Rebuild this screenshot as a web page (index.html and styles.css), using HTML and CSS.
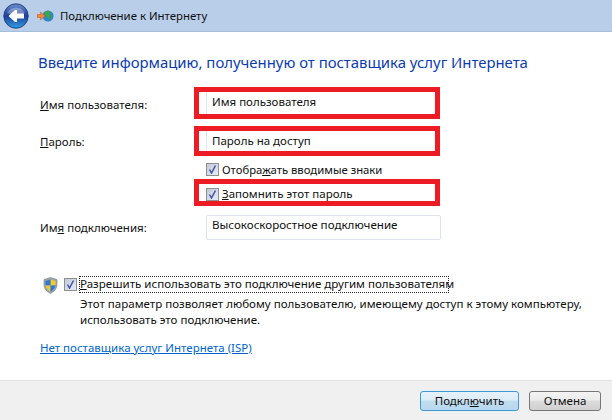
FILE: index.html
```html
<!DOCTYPE html>
<html lang="ru">
<head>
    <title>Подключение к Интернету</title>
    <meta charset="UTF-8">
    <link rel="stylesheet" href="styles.css">
</head>
<body>
    <div class="header">
        <svg class="back-icon" width="26" height="26" viewBox="0 0 26 26">
            <defs>
                <linearGradient id="backfill" x1="0" y1="0" x2="0" y2="1">
                    <stop offset="0" stop-color="#6f8fd0"/>
                    <stop offset="0.5" stop-color="#1c3f98"/>
                    <stop offset="1" stop-color="#2fa0e6"/>
                </linearGradient>
            </defs>
            <circle cx="13" cy="13" r="12.2" fill="url(#backfill)" stroke="#24407c" stroke-width="1"/>
            <path d="M4.5 10 A9 8 0 0 1 21.5 10 Q13 14 4.5 10 Z" fill="#ffffff" opacity="0.3"/>
            <path d="M5.5 13 L12 7 L14 7 L14 10.5 L21 10.5 L21 15.5 L14 15.5 L14 19 L12 19 Z" fill="#ffffff"/>
        </svg>
        <svg class="globe-icon" width="17" height="14" viewBox="0 0 17 14">
            <circle cx="11" cy="7" r="5.6" fill="#2f86c8"/>
            <path d="M8 3 Q11 1 13 2.5 L12.5 5 L14 7 L12 10 L10 8 L8 6 Z" fill="#3fa63c"/>
            <path d="M14 9 L16 8 L15 11 Z" fill="#3fa63c"/>
            <path d="M0.5 5.5 L3.5 5.5 L3.5 3 L8 7 L3.5 11 L3.5 8.5 L0.5 8.5 Z" fill="#f0883a" stroke="#c8602a" stroke-width="0.6"/>
        </svg>
        <span class="header-title">Подключение к Интернету</span>
    </div>

    <div class="main">
        <h1>Введите информацию, полученную от поставщика услуг Интернета</h1>

        <div class="form">
            <div class="label label-user"><u>И</u>мя пользователя:</div>
            <div class="marked marked-user"><div class="field">Имя пользователя</div></div>

            <div class="label label-pass"><u>П</u>ароль:</div>
            <div class="marked marked-pass"><div class="field">Пароль на доступ</div></div>

            <div class="check-row check-show">
                <span class="check"><svg width="9" height="9" viewBox="0 0 9 9"><path d="M1.5 4.5 L3.5 8 L7.5 0.5" class="tick"/></svg></span>
                <span class="check-text">Отобра<u>ж</u>ать вводимые знаки</span>
            </div>
            <div class="marked marked-save">
                <div class="check-row">
                    <span class="check"><svg width="9" height="9" viewBox="0 0 9 9"><path d="M1.5 4.5 L3.5 8 L7.5 0.5" class="tick"/></svg></span>
                    <span><u>З</u>апомнить этот пароль</span>
                </div>
            </div>

            <div class="label label-conn">Им<u>я</u> подключения:</div>
            <div class="input-box">Высокоскоростное подключение</div>
        </div>

        <div class="share">
            <svg class="shield" width="15" height="17" viewBox="0 0 15 17">
                <path d="M7.5 0.5 L14 2.5 L14 8 Q14 13 7.5 16.5 Q1 13 1 8 L1 2.5 Z" fill="#9aa3ab" stroke="#7c858c" stroke-width="0.6"/>
                <path d="M7.5 2.5 L12.5 4 L12.5 8.5 L7.5 8.5 Z" fill="#f4c92e"/>
                <path d="M7.5 2.5 L2.5 4 L2.5 8.5 L7.5 8.5 Z" fill="#2f78cf"/>
                <path d="M2.5 8.5 L7.5 8.5 L7.5 14.5 Q3.5 12.5 2.5 8.5 Z" fill="#f4c92e"/>
                <path d="M12.5 8.5 L7.5 8.5 L7.5 14.5 Q11.5 12.5 12.5 8.5 Z" fill="#2f78cf"/>
            </svg>
            <span class="check check-share"><svg width="9" height="9" viewBox="0 0 9 9"><path d="M1.5 4.5 L3.5 8 L7.5 0.5" class="tick"/></svg></span>
            <div class="share-text">
                <div class="focused"><u>Р</u>азрешить использовать это подключение другим пользователям</div>
                <div class="desc">Этот параметр позволяет любому пользователю, имеющему доступ к этому компьютеру,<br>использовать это подключение.</div>
            </div>
        </div>

        <div class="isp-link">Нет поставщика услуг Интернета (ISP)</div>
    </div>

    <div class="footer">
        <div class="btn btn-default">Подкл<u>ю</u>чить</div>
        <div class="btn btn-cancel">Отмена</div>
    </div>
</body>
</html>
```

FILE: styles.css
```css
html, body {
    margin: 0;
    padding: 0;
}

body {
    width: 612px;
    height: 420px;
    overflow: hidden;
    display: flex;
    flex-direction: column;
    background: #ffffff;
    color: #101010;
    font-family: "Noto Sans", "Open Sans", sans-serif;
    font-size: 11.5px;
    line-height: 16px;
}

.header {
    height: 31px;
    flex: none;
    display: flex;
    align-items: center;
    background: #b9cfe9;
    border-bottom: 1px solid #a6bdd8;
}

.back-icon {
    margin-left: 3px;
}

.globe-icon {
    margin-left: 8px;
}

.header-title {
    margin-left: 6px;
    font-size: 11.4px;
}

.main {
    flex: 1;
    padding: 20px 0 0 40px;
}

h1 {
    margin: 0 0 15px -2px;
    font-size: 14.9px;
    font-weight: normal;
    line-height: 20px;
    color: #0a3cb0;
}

.form {
    display: grid;
    grid-template-columns: 154px 246px;
    width: 400px;
}

.label-user {
    grid-column: 1;
    padding-top: 10px;
}

.label-pass {
    margin-top: 7px;
    padding-top: 8px;
}

.label-conn {
    margin-top: 9px;
    padding-top: 5px;
}

.marked {
    border: 5px solid #ed1c24;
    box-sizing: border-box;
}

.marked-user {
    height: 32px;
}

.marked-pass {
    height: 30px;
    margin-top: 7px;
}

.field {
    height: 100%;
    margin-left: 7px;
    padding-left: 5px;
    border-left: 1px solid #e2e7ee;
    line-height: 20px;
}

.check-row {
    display: flex;
    align-items: center;
}

.check-show {
    grid-column: 2;
    margin: 7px 0 3px 12px;
    height: 13px;
}

.check-text {
    font-size: 11.3px;
}

.marked-save {
    grid-column: 2;
    height: 27px;
    padding: 2px 0 0 7px;
}

.check {
    width: 11px;
    height: 11px;
    flex: none;
    margin-right: 3px;
    display: flex;
    align-items: center;
    justify-content: center;
    border: 1px solid #8e8f8f;
    background: linear-gradient(135deg, #c3c9d9, #e8ebf1);
}

.tick {
    fill: none;
    stroke: #3f55ad;
    stroke-width: 1.5;
}

.input-box {
    grid-column: 2;
    width: 235px;
    height: 25px;
    box-sizing: border-box;
    margin: 9px 0 0 12px;
    padding: 1px 0 0 5px;
    border: 1px solid #dde3ea;
    border-radius: 2px;
    font-size: 11.6px;
}

.share {
    display: flex;
    align-items: flex-start;
    margin: 36px 0 0 3px;
}

.shield {
    margin-top: 1px;
}

.check-share {
    margin: 2px 2px 0 6px;
}

.share-text {
    font-size: 11.55px;
}

.focused {
    width: 370px;
    box-sizing: border-box;
    height: 17px;
    padding-left: 1px;
    white-space: nowrap;
    outline: 1px dotted #222222;
    outline-offset: -1px;
}

.desc {
    margin-top: 3px;
    padding-left: 1px;
}

.isp-link {
    margin-top: 12px;
    color: #0066cc;
    text-decoration: underline;
}

.footer {
    height: 40px;
    flex: none;
    display: flex;
    justify-content: flex-end;
    gap: 10px;
    padding: 10px 11px 0 0;
    box-sizing: border-box;
    background: #f0f0f0;
    border-top: 1px solid #dfdfdf;
}

.btn {
    height: 20px;
    box-sizing: border-box;
    border-radius: 3px;
    text-align: center;
    line-height: 18px;
}

.btn-default {
    width: 99px;
    border: 1px solid #3b9bd8;
    background: linear-gradient(#e6f2fa 0%, #dcecf7 45%, #c0dcef 50%, #b9d8ee 100%);
}

.btn-cancel {
    width: 72px;
    border: 1px solid #777777;
    background: linear-gradient(#f4f4f4 0%, #ebebeb 45%, #dcdcdc 50%, #cfcfcf 100%);
}
```
